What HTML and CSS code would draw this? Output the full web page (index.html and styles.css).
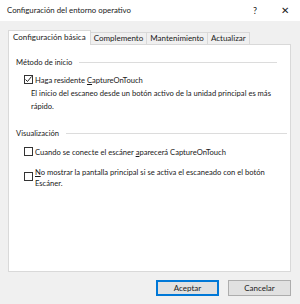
FILE: index.html
```html
<!DOCTYPE html>
<html lang="es">
<head>
    <meta charset="UTF-8">
    <meta name="viewport" content="width=device-width, initial-scale=1.0">
    <title>Configuración del entorno operativo</title>
    <link rel="stylesheet" href="styles.css">
</head>
<body>
    <div class="window">
        <div class="titlebar">
            <span class="title">Configuración del entorno operativo</span>
            <span class="help">?</span>
            <span class="close">&#x2715;</span>
        </div>

        <div class="content">
            <div class="tabs">
                <div class="tab active">Configuración básica</div>
                <div class="tab">Complemento</div>
                <div class="tab">Mantenimiento</div>
                <div class="tab">Actualizar</div>
            </div>

            <div class="panel">
                <div class="group group-start">
                    <div class="legend"><span>Método de inicio</span><span class="rule"></span></div>
                    <label class="check">
                        <span class="box checked">
                            <svg width="9" height="9" viewBox="0 0 9 9"><path d="M1.5 4.5 L3.5 6.5 L7.5 1.5" fill="none" stroke="#222" stroke-width="1"/></svg>
                        </span>
                        <span>Haga residente <u>C</u>aptureOnTouch</span>
                    </label>
                    <p class="desc">El inicio del escaneo desde un botón activo de la unidad principal es más rápido.</p>
                </div>

                <div class="group group-view">
                    <div class="legend"><span>Visualización</span><span class="rule"></span></div>
                    <label class="check">
                        <span class="box"></span>
                        <span>Cuando se conecte el escáner <u>a</u>parecerá CaptureOnTouch</span>
                    </label>
                    <label class="check multi">
                        <span class="box"></span>
                        <span><u>N</u>o mostrar la pantalla principal si se activa el escaneado con el botón Escáner.</span>
                    </label>
                </div>
            </div>

            <div class="buttons">
                <button class="btn default">Aceptar</button>
                <button class="btn">Cancelar</button>
            </div>
        </div>
    </div>
</body>
</html>
```

FILE: styles.css
```css
body {
    margin: 0;
    font-family: Lato, "Noto Sans", sans-serif;
    font-size: 7.6px;
    color: #1a1a1a;
}
.window {
    width: 300px;
    height: 304px;
    background-color: #f0f0f0;
}
.titlebar {
    height: 20px;
    background-color: white;
    display: flex;
    align-items: center;
    padding: 0 8px 1px 7px;
    font-size: 7.8px;
}
.title {
    flex: 1;
}
.help {
    margin-right: 24px;
    font-size: 9px;
}
.close {
    font-size: 10px;
    margin-right: 3px;
}
.content {
    padding: 0 9px 0 8px;
}
.tabs {
    display: flex;
    align-items: flex-end;
    height: 23px;
    position: relative;
    z-index: 1;
    font-size: 8px;
}
.tab {
    height: 11px;
    line-height: 11px;
    padding: 0 3px;
    border: 1px solid #d9d9d9;
    border-bottom: none;
    border-left: none;
    background-color: #f0f0f0;
}
.tab.active {
    height: 14px;
    line-height: 13px;
    padding: 0 4px;
    border-left: 1px solid #d9d9d9;
    background-color: white;
    margin-bottom: -1px;
}
.panel {
    box-sizing: border-box;
    height: 228px;
    background-color: white;
    border: 1px solid #d9d9d9;
    padding: 11px 0 0 7px;
}
.legend {
    display: flex;
    align-items: center;
    height: 12px;
}
.rule {
    flex: 1;
    height: 1px;
    background-color: #dcdcdc;
    margin-left: 7px;
}
.group-start .legend {
    margin-right: 13px;
}
.group-view {
    margin-top: 14px;
}
.group-view .legend {
    margin-right: 3px;
}
.check {
    display: flex;
    align-items: flex-start;
    margin: 6px 0 0 8px;
    line-height: 12px;
}
.check.multi {
    line-height: 10.5px;
    margin-top: 9px;
    padding-right: 14px;
}
.box {
    width: 9px;
    height: 9px;
    box-sizing: border-box;
    border: 1px solid #333;
    background-color: white;
    margin: 1px 2px 0 0;
    flex-shrink: 0;
    position: relative;
}
.check.multi .box {
    margin-top: 5px;
}
.box svg {
    position: absolute;
    left: -1px;
    top: -1px;
}
.desc {
    margin: 1px 2px 0 15px;
    line-height: 13px;
}
.group-view .check:first-of-type {
    margin-top: 7px;
}
.buttons {
    display: flex;
    justify-content: flex-end;
    gap: 9px;
    margin-top: 8px;
}
.btn {
    width: 63px;
    height: 16px;
    font-family: inherit;
    font-size: 8px;
    color: #1a1a1a;
    background-color: #e1e1e1;
    border: 1px solid #adadad;
    padding: 0;
}
.btn.default {
    border: 1px solid #0078d7;
    box-shadow: inset 0 0 0 1px #0078d7;
}
```
